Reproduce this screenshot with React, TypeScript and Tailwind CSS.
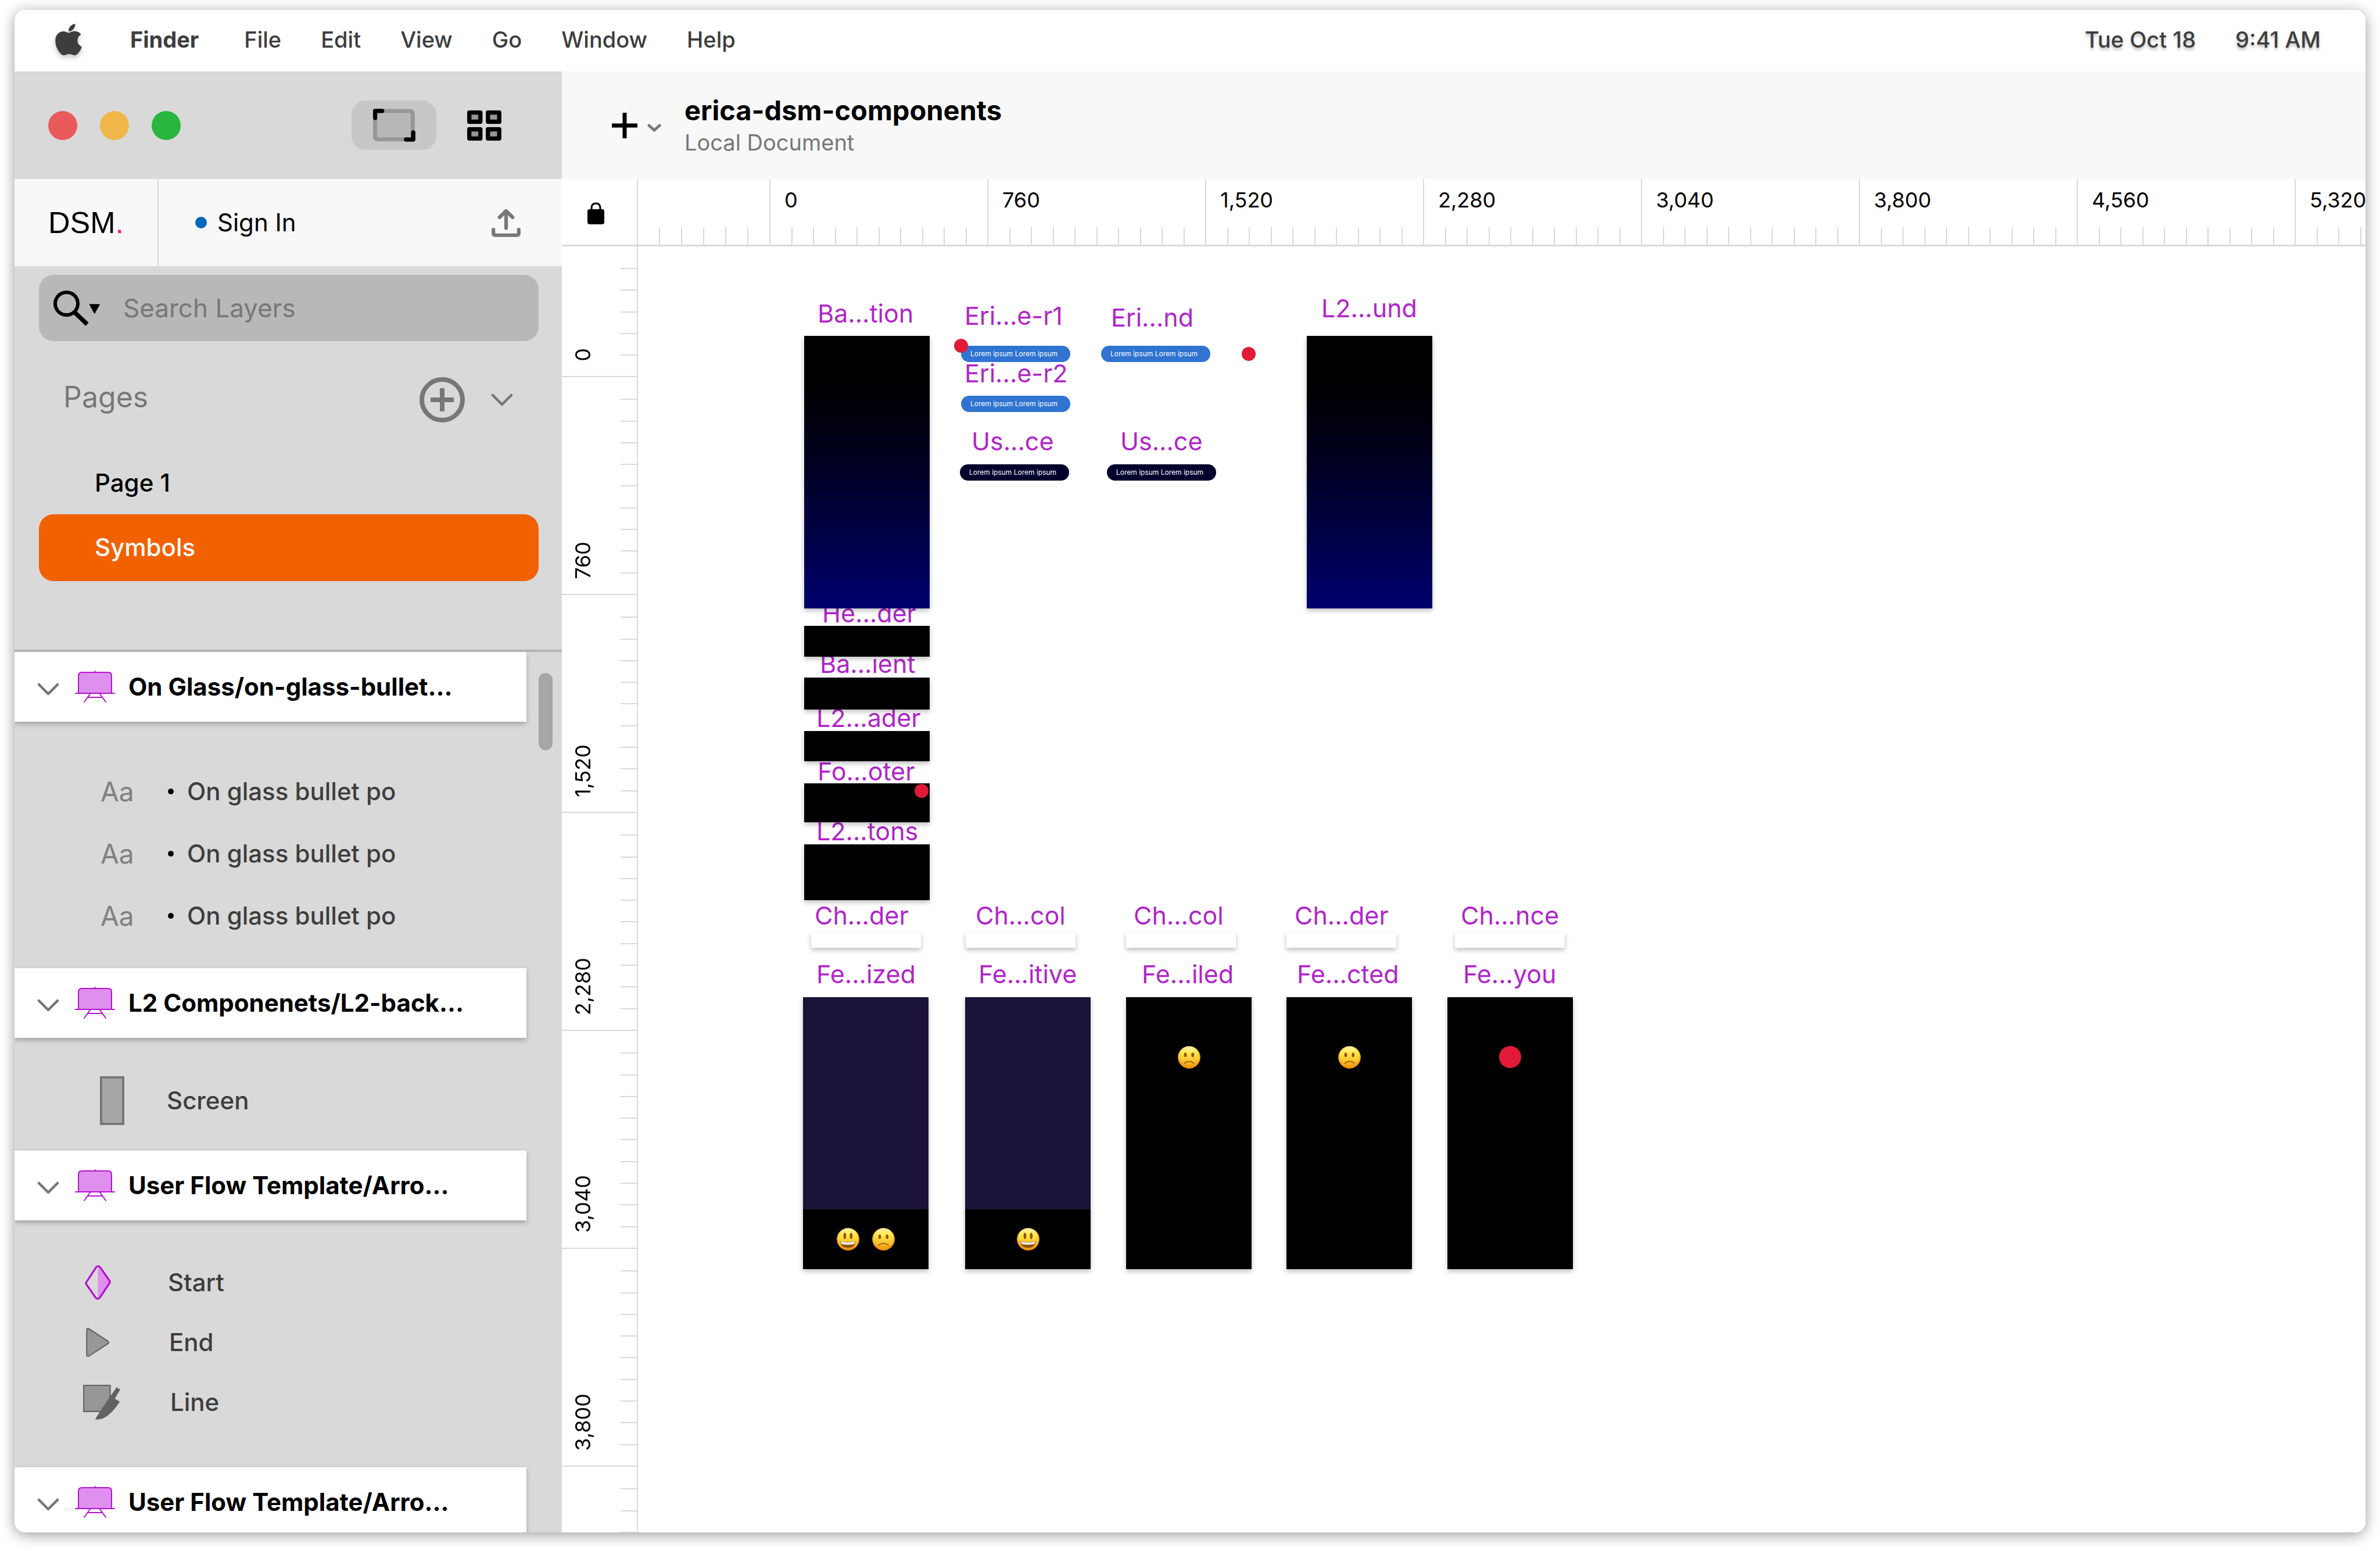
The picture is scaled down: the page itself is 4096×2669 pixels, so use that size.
import { useId, type ReactNode } from "react";
import { FaApple } from "react-icons/fa";

const MENUS = ["File", "Edit", "View", "Go", "Window", "Help"];
const RULER_X = ["0", "760", "1,520", "2,280", "3,040", "3,800", "4,560", "5,320"];
const RULER_Y = ["760", "1,520", "2,280", "3,040", "3,800"];

function Chevron({ className }: { className: string }) {
  return (
    <svg viewBox="0 0 38 22" className={className} fill="none" stroke="#777" strokeWidth="4.5" strokeLinecap="round" strokeLinejoin="round" aria-hidden="true">
      <path d="M3 3 L19 19 L35 3" />
    </svg>
  );
}

function ArtboardToggleIcon() {
  return (
    <svg viewBox="0 0 248 193" className="h-[57px] w-[73px]" fill="none" aria-hidden="true">
      <rect x="12" y="13" width="220" height="166" rx="14" fill="#b8b8b8" stroke="#979797" strokeWidth="24" />
      <path d="M12 54 V13 H53" stroke="#000" strokeWidth="25" strokeLinecap="round" strokeLinejoin="round" />
      <path d="M235 139 V180 H193" stroke="#000" strokeWidth="25" strokeLinecap="round" strokeLinejoin="round" />
    </svg>
  );
}

function GridIcon() {
  return (
    <svg viewBox="0 0 201 177" className="h-[52px] w-[59px]" fill="#979797" stroke="#000" strokeWidth="25" strokeLinejoin="round" aria-hidden="true">
      <rect x="12.5" y="12.5" width="65" height="54" />
      <rect x="122" y="12.5" width="66" height="54" />
      <rect x="12.5" y="110.5" width="65" height="54" />
      <rect x="122" y="110.5" width="66" height="54" />
    </svg>
  );
}

function UploadIcon() {
  return (
    <svg viewBox="0 0 171 167" className="h-[49px] w-[50px]" fill="none" stroke="#777" strokeWidth="21" strokeLinecap="round" strokeLinejoin="round" aria-hidden="true">
      <path d="M85.500 114 V14 M47 51 L85.500 13 L124 51" />
      <path d="M11 123 V146 Q11 156 21 156 H150 Q160 156 160 146 V123" />
    </svg>
  );
}

function SearchIcon() {
  return (
    <svg viewBox="0 0 80 61" className="h-[61px] w-[80px] shrink-0" aria-hidden="true">
      <circle cx="22.500" cy="22.500" r="19.500" fill="none" stroke="#000" strokeWidth="6" />
      <path d="M36 37 L58 58" stroke="#000" strokeWidth="7.500" />
      <path d="M62.500 24 H79 L70.700 39 Z" fill="#000" stroke="#000" strokeWidth="1.500" strokeLinejoin="round" />
    </svg>
  );
}

function AddCircleIcon() {
  return (
    <svg viewBox="0 0 78 78" className="size-[78px]" fill="none" stroke="#777" strokeWidth="8" aria-hidden="true">
      <circle cx="39" cy="39" r="35" />
      <path d="M39 19 V59 M19 39 H59" />
    </svg>
  );
}

function EaselIcon() {
  return (
    <svg viewBox="0 0 69 56" className="h-[56px] w-[69px] shrink-0" fill="none" stroke="#b512d0" strokeWidth="2" strokeLinecap="round" aria-hidden="true">
      <path d="M34.500 1 V3" />
      <path d="M6 39 V9 Q6 3 12 3 H57 Q63 3 63 9 V39 Z" fill="#df8fee" />
      <path d="M1 39 H68" />
      <path d="M26 40 L16 54 M43 40 L53 54 M22 46 H47" />
    </svg>
  );
}

function LockIcon() {
  return (
    <svg viewBox="0 0 29 38" className="h-[38px] w-[29px]" aria-hidden="true">
      <rect x="0" y="12" width="29" height="26" rx="4" fill="#000" />
      <path d="M7 13 V10 Q7 2 14.500 2 Q22 2 22 10 V13" fill="none" stroke="#000" strokeWidth="3" />
    </svg>
  );
}

function ScreenIcon() {
  return <span className="block h-[84px] w-[42px] border-4 border-[#777] bg-[#a6a6a6]" />;
}

function DiamondIcon() {
  return (
    <svg viewBox="0 0 150 202" className="h-[60px] w-[45px]" aria-hidden="true">
      <path d="M75 10 L139 92 Q145 98 140 104 L86 192 Q80 196 75 196 Z" fill="#df8fee" />
      <path d="M65 12 Q76 0 87 12 L142 90 Q147 97 142 105 L86 189 Q74 202 62 189 L8 111 Q4 105 8 99 Z" fill="none" stroke="#b512d0" strokeWidth="11" strokeLinejoin="round" />
    </svg>
  );
}

function TriangleIcon() {
  return (
    <svg viewBox="0 0 134 168" className="h-[50px] w-[40px]" aria-hidden="true">
      <path d="M4 14 Q4 -1 18 6 L125 76 Q136 84 125 93 L18 162 Q4 169 4 154 Z" fill="#979797" stroke="#626262" strokeWidth="7" />
    </svg>
  );
}

function KnifeIcon() {
  return (
    <svg viewBox="0 0 215 202" className="h-[60px] w-[64px]" aria-hidden="true">
      <rect x="3.500" y="3.500" width="153" height="151" fill="#979797" stroke="#626262" strokeWidth="7" />
      <path d="M194 14 L215 28 L184 80 L212 98 Q172 165 118 194 Q94 204 70 200 Q80 180 158 66 Z" fill="#626262" />
    </svg>
  );
}

function Face({ mood }: { mood: "happy" | "sad" }) {
  const id = useId();
  return (
    <svg viewBox="0 0 132 132" className="size-[39px]" role="img" aria-label={mood === "happy" ? "Smiling face" : "Frowning face"}>
      <defs>
        <linearGradient id={`${id}f`} x1="0" y1="0" x2="0" y2="1">
          <stop offset="0" stopColor="#fff3b0" />
          <stop offset="0.300" stopColor="#ffe94f" />
          <stop offset="0.600" stopColor="#fdca32" />
          <stop offset="1" stopColor="#f0930f" />
        </linearGradient>
        <radialGradient id={`${id}e`} cx="0.500" cy="0.450" r="0.550">
          <stop offset="0.700" stopColor="#f39a12" stopOpacity="0" />
          <stop offset="1" stopColor="#ee8a0c" stopOpacity="0.800" />
        </radialGradient>
      </defs>
      <circle cx="66" cy="66" r="65" fill={`url(#${id}f)`} />
      <circle cx="66" cy="66" r="65" fill={`url(#${id}e)`} />
      {mood === "happy" ? (
        <>
          <ellipse cx="47" cy="47" rx="8" ry="19" fill="#8f5205" />
          <ellipse cx="84" cy="47" rx="8" ry="19" fill="#8f5205" />
          <path d="M21 77 Q65 88 109 77 Q107 116 65 116 Q23 116 21 77 Z" fill="#8f5205" />
          <path d="M24 79 Q65 90 106 79 Q106 94 96 96 Q65 101 34 96 Q24 94 24 79 Z" fill="#ececf2" />
        </>
      ) : (
        <>
          <ellipse cx="44" cy="52" rx="8" ry="13" fill="#8f5205" />
          <ellipse cx="87" cy="52" rx="8" ry="13" fill="#8f5205" />
          <path d="M38 101 Q66 79 94 101" fill="none" stroke="#8f5205" strokeWidth="5" strokeLinecap="round" />
        </>
      )}
    </svg>
  );
}

function MenuBar() {
  return (
    <header className="flex h-[106px] shrink-0 items-center bg-white pb-[4px] pl-[69px] pr-[77px] text-[38px] leading-[44px] text-[#3d3d3d] [text-shadow:0_4px_4px_rgba(0,0,0,0.25)]">
      <button type="button" aria-label="Apple menu" className="mr-[82px] shrink-0 drop-shadow-[0_4px_4px_rgba(0,0,0,0.25)]">
        <FaApple className="h-[62px] w-[48px]" />
      </button>
      <button type="button" className="mr-[78px] font-bold">Finder</button>
      <nav className="flex gap-[68px]">
        {MENUS.map((m) => (
          <button key={m} type="button" className="font-medium">{m}</button>
        ))}
      </nav>
      <div className="ml-auto flex gap-[68px] font-medium">
        <span>Tue Oct 18</span>
        <time>9:41 AM</time>
      </div>
    </header>
  );
}

function LayerHeader({ title }: { title: string }) {
  return (
    <button type="button" className="flex h-[120px] w-full shrink-0 items-center bg-white pl-[39px] text-left shadow-[0_4px_8px_rgba(0,0,0,0.25)]">
      <Chevron className="mt-[8px] h-[22px] w-[38px] shrink-0" />
      <span className="ml-[27px]"><EaselIcon /></span>
      <span className="ml-[23px] text-[42px] font-bold leading-[48px] text-black">{title}</span>
    </button>
  );
}

function LayerRow({ icon, label, className }: { icon: ReactNode; label: string; className: string }) {
  return (
    <li className={`flex items-center ${className}`}>
      {icon}
      <span className="text-[42px] font-medium leading-[48px] text-[#3d3d3d]">{label}</span>
    </li>
  );
}

function Sidebar() {
  return (
    <aside className="flex w-[942px] shrink-0 flex-col overflow-hidden bg-[#d9d9d9]">
      <div className="flex h-[185px] shrink-0 items-center pl-[58px] pr-[104px]">
        <div className="flex gap-[39px]">
          <button type="button" aria-label="Close" className="size-[50px] rounded-full bg-[#e95a5a]" />
          <button type="button" aria-label="Minimize" className="size-[50px] rounded-full bg-[#f0b648]" />
          <button type="button" aria-label="Zoom" className="size-[50px] rounded-full bg-[#28b63f]" />
        </div>
        <div className="ml-auto flex items-center gap-[53px]">
          <button type="button" aria-label="Canvas view" className="flex h-[85px] w-[146px] items-center justify-center rounded-[24px] bg-[#c7c7c7]">
            <ArtboardToggleIcon />
          </button>
          <button type="button" aria-label="Components view"><GridIcon /></button>
        </div>
      </div>

      <div className="flex h-[150px] shrink-0 bg-[#f8f8f8]">
        <div className="flex w-[248px] items-center justify-center border-r-2 border-[#d9d9d9] font-['Liberation_Sans',sans-serif] text-[52px] leading-[60px]">
          DSM<span className="text-[#ff1075]">.</span>
        </div>
        <div className="flex flex-1 items-center pl-[63px] pr-[71px]">
          <span className="mr-[18px] size-[20px] rounded-full bg-[#0068b8]" />
          <button type="button" className="text-[42px] leading-[48px]">Sign In</button>
          <button type="button" aria-label="Upload" className="ml-auto"><UploadIcon /></button>
        </div>
      </div>

      <label className="ml-[42px] mr-[40px] mt-[15px] flex h-[114px] shrink-0 items-center gap-[40px] rounded-[25px] bg-[#b8b8b8] pl-[25px]">
        <SearchIcon />
        <input type="text" aria-label="Search Layers" placeholder="Search Layers" className="min-w-0 flex-1 bg-transparent text-[44px] leading-[52px] outline-none placeholder:text-[#777] placeholder:opacity-100" />
      </label>

      <section className="shrink-0 pb-[118px]">
        <div className="mt-[62px] flex h-[78px] items-center pl-[84px] pr-[84px] text-[#777]">
          <h2 className="pb-[10px] text-[50px] leading-[60px]">Pages</h2>
          <button type="button" aria-label="Add page" className="ml-auto mr-[45px]"><AddCircleIcon /></button>
          <button type="button" aria-label="Collapse pages"><Chevron className="h-[22px] w-[38px]" /></button>
        </div>
        <div className="ml-[42px] mr-[40px] mt-[50px] flex flex-col text-[42px] font-medium leading-[48px]">
          <button type="button" className="h-[108px] pl-[96px] text-left text-black">Page 1</button>
          <button type="button" className="h-[115px] rounded-[25px] bg-[#f26100] pb-[2px] pl-[96px] text-left text-white">Symbols</button>
        </div>
      </section>

      <section className="flex min-h-0 flex-1 overflow-hidden border-t-4 border-[#b3b3b3]">
        <div className="min-w-0 flex-1">
          <LayerHeader title="On Glass/on-glass-bullet..." />
          <ul className="pb-[37px] pt-[66px]">
            {[0, 1, 2].map((i) => (
              <LayerRow
                key={i}
                className="h-[107px] pl-[148px]"
                icon={
                  <>
                    <span className="w-[116px] text-[46px] leading-[48px] text-[#808080]">Aa</span>
                    <span className="mr-[23px] size-[10px] rounded-full bg-black" />
                  </>
                }
                label="On glass bullet po"
              />
            ))}
          </ul>
          <LayerHeader title="L2 Componenets/L2-back..." />
          <ul className="pb-[44px] pt-[66px]">
            <LayerRow className="h-[84px] pl-[147px]" icon={<span className="w-[115px]"><ScreenIcon /></span>} label="Screen" />
          </ul>
          <LayerHeader title="User Flow Template/Arro..." />
          <ul className="pb-[61px] pt-[55px]">
            <LayerRow className="h-[103px] pl-[118px]" icon={<span className="w-[146px] pl-[3px]"><DiamondIcon /></span>} label="Start" />
            <LayerRow className="h-[103px] pl-[118px]" icon={<span className="w-[148px] pl-[5px]"><TriangleIcon /></span>} label="End" />
            <LayerRow className="h-[103px] pl-[118px]" icon={<span className="w-[150px]"><KnifeIcon /></span>} label="Line" />
          </ul>
          <LayerHeader title="User Flow Template/Arro..." />
        </div>
        <div className="w-[61px] shrink-0 pl-[21px] pt-[36px]">
          <div className="h-[133px] w-[24px] rounded-full bg-[#a6a6a6]" />
        </div>
      </section>
    </aside>
  );
}

function DocumentBar() {
  return (
    <div className="flex h-[185px] shrink-0 items-center bg-[#f8f8f8] pl-[86px]">
      <button type="button" aria-label="Insert" className="flex items-center gap-[17px]">
        <svg viewBox="0 0 44 44" className="size-[44px]" stroke="#000" strokeWidth="7" aria-hidden="true">
          <path d="M22 0 V44 M0 22 H44" />
        </svg>
        <svg viewBox="0 0 24 14" className="mt-[8px] h-[14px] w-[24px]" fill="none" stroke="#777" strokeWidth="5" strokeLinecap="round" aria-hidden="true">
          <path d="M3 3 L12 11 L21 3" />
        </svg>
      </button>
      <div className="ml-[40px] pt-[2px]">
        <h1 className="text-[47px] font-bold leading-[56px]">erica-dsm-components</h1>
        <p className="text-[38px] leading-[54px] text-[#777]">Local Document</p>
      </div>
    </div>
  );
}

function Ticks({ count }: { count: number }) {
  return (
    <div className="mt-auto flex h-[30px]">
      {Array.from({ length: count }, (_, i) => (
        <span key={i} className={i === count - 1 ? "flex-1" : "flex-1 border-r-2 border-[#d9d9d9]"} />
      ))}
    </div>
  );
}

function TopRuler() {
  return (
    <div className="flex h-[116px] shrink-0 border-b-3 border-[#d9d9d9]">
      <div className="flex w-[131px] shrink-0 justify-center border-r-2 border-[#d9d9d9] pt-[40px]">
        <button type="button" aria-label="Lock rulers" className="mr-[13px] self-start"><LockIcon /></button>
      </div>
      <div className="flex min-w-0 flex-1 overflow-hidden">
        <div className="flex w-[226px] shrink-0 flex-col"><Ticks count={6} /></div>
        {RULER_X.map((n) => (
          <div key={n} className="flex w-[375px] shrink-0 flex-col border-l-2 border-[#d9d9d9] pt-[16px]">
            <span className="pl-[24px] text-[36px] leading-[40px]">{n}</span>
            <Ticks count={10} />
          </div>
        ))}
      </div>
    </div>
  );
}

function SideBlock({ label, count, className }: { label: string; count: number; className: string }) {
  return (
    <div className={`flex shrink-0 items-end justify-between border-b-2 border-[#d9d9d9] ${className}`}>
      <span className="mb-[25px] ml-[16px] rotate-180 text-[36px] leading-[40px] [writing-mode:vertical-rl]">{label}</span>
      <div className="flex w-[28px] flex-col self-stretch pt-[2px]">
        {Array.from({ length: count }, (_, i) => (
          <span key={i} className={i === count - 1 ? "flex-1" : "flex-1 border-b-2 border-[#d9d9d9]"} />
        ))}
      </div>
    </div>
  );
}

function SideRuler() {
  return (
    <div className="flex w-[131px] shrink-0 flex-col overflow-hidden border-r-2 border-[#d9d9d9]">
      <SideBlock label="0" count={6} className="h-[225px]" />
      {RULER_Y.map((n) => (
        <SideBlock key={n} label={n} count={10} className="h-[375px]" />
      ))}
      <SideBlock label="" count={10} className="h-[375px]" />
    </div>
  );
}

type Item = { x: number; y: number };

const LABELS: (Item & { text: string })[] = [
  { text: "Ba...tion", x: 309, y: 95 },
  { text: "Eri...e-r1", x: 562, y: 99 },
  { text: "Eri...nd", x: 814, y: 102 },
  { text: "L2...und", x: 1176, y: 86 },
  { text: "Eri...e-r2", x: 562, y: 198 },
  { text: "Us...ce", x: 574, y: 315 },
  { text: "Us...ce", x: 830, y: 315 },
  { text: "He...der", x: 317, y: 611 },
  { text: "Ba...ient", x: 313, y: 698 },
  { text: "L2...ader", x: 307, y: 791 },
  { text: "Fo...oter", x: 309, y: 883 },
  { text: "L2...tons", x: 307, y: 986 },
  { text: "Ch...der", x: 304, y: 1131 },
  { text: "Ch...col", x: 581, y: 1131 },
  { text: "Ch...col", x: 853, y: 1131 },
  { text: "Ch...der", x: 1130, y: 1131 },
  { text: "Ch...nce", x: 1416, y: 1131 },
  { text: "Fe...ized", x: 307, y: 1232 },
  { text: "Fe...itive", x: 586, y: 1232 },
  { text: "Fe...iled", x: 867, y: 1232 },
  { text: "Fe...cted", x: 1134, y: 1232 },
  { text: "Fe...you", x: 1420, y: 1232 },
];

const BARS: (Item & { h: number })[] = [
  { x: 286, y: 653, h: 53 },
  { x: 286, y: 742, h: 55 },
  { x: 286, y: 834, h: 52 },
  { x: 286, y: 924, h: 67 },
  { x: 286, y: 1029, h: 96 },
];

const PILLS: (Item & { dark?: boolean })[] = [
  { x: 556, y: 171 },
  { x: 556, y: 257 },
  { x: 797, y: 171 },
  { x: 554, y: 375, dark: true },
  { x: 807, y: 375, dark: true },
];

const DOTS: Item[] = [
  { x: 544, y: 159 },
  { x: 1039, y: 173 },
  { x: 476, y: 925 },
];

const STRIPS: Item[] = [298, 564, 840, 1116, 1406].map((x) => ({ x, y: 1180 }));

function Screen({ x, children }: { x: number; children: ReactNode }) {
  return (
    <div className="absolute flex h-[468px] w-[216px] flex-col bg-black shadow-[0_4px_8px_rgba(0,0,0,0.25)]" style={{ left: x, top: 1292 }}>
      {children}
    </div>
  );
}

function Canvas() {
  return (
    <main className="relative min-w-0 flex-1 overflow-hidden bg-white">
      {LABELS.map((l, i) => (
        <span key={i} className="absolute whitespace-nowrap text-[43px] leading-[40px] text-[#b025c9]" style={{ left: l.x, top: l.y }}>
          {l.text}
        </span>
      ))}
      {[286, 1151].map((x) => (
        <div key={x} className="absolute h-[469px] w-[216px] bg-linear-to-b from-black to-[#00006e] shadow-[0_4px_8px_rgba(0,0,0,0.25)]" style={{ left: x, top: 154 }} />
      ))}
      {BARS.map((b) => (
        <div key={b.y} className="absolute w-[216px] bg-black shadow-[0_4px_8px_rgba(0,0,0,0.25)]" style={{ left: b.x, top: b.y, height: b.h }} />
      ))}
      {PILLS.map((p, i) => (
        <div
          key={i}
          className={`absolute flex h-[28px] w-[188px] items-center rounded-[14px] pl-[16px] text-[12px] leading-[16px] text-white ${p.dark ? "bg-[#00002c]" : "bg-[#3073d1]"}`}
          style={{ left: p.x, top: p.y }}
        >
          Lorem ipsum Lorem ipsum
        </div>
      ))}
      {DOTS.map((d, i) => (
        <div key={i} className="absolute size-[24px] rounded-full bg-[#e21a37]" style={{ left: d.x, top: d.y }} />
      ))}
      {STRIPS.map((s) => (
        <div key={s.x} className="absolute h-[27px] w-[189px] bg-white shadow-[0_4px_8px_rgba(0,0,0,0.25)]" style={{ left: s.x, top: s.y }} />
      ))}
      <Screen x={284}>
        <div className="h-[365px] bg-[#1b1239]" />
        <div className="flex flex-1 items-center justify-center gap-[22px]">
          <Face mood="happy" />
          <Face mood="sad" />
        </div>
      </Screen>
      <Screen x={563}>
        <div className="h-[365px] bg-[#1b1239]" />
        <div className="flex flex-1 items-center justify-center"><Face mood="happy" /></div>
      </Screen>
      <Screen x={840}>
        <div className="flex justify-center pt-[84px]"><Face mood="sad" /></div>
      </Screen>
      <Screen x={1116}>
        <div className="flex justify-center pt-[84px]"><Face mood="sad" /></div>
      </Screen>
      <Screen x={1393}>
        <div className="flex justify-center pt-[84px]"><span className="size-[38px] rounded-full bg-[#e21a37]" /></div>
      </Screen>
    </main>
  );
}

export default function App() {
  return (
    <div className="h-screen w-full bg-white px-[25px] pb-[32px] pt-[17px] font-['Inter',sans-serif] text-black">
      <div className="flex h-full flex-col overflow-hidden rounded-[18px] shadow-[0_4px_24px_rgba(0,0,0,0.4)]">
        <MenuBar />
        <div className="flex min-h-0 flex-1">
          <Sidebar />
          <div className="flex min-w-0 flex-1 flex-col bg-white">
            <DocumentBar />
            <TopRuler />
            <div className="flex min-h-0 flex-1">
              <SideRuler />
              <Canvas />
            </div>
          </div>
        </div>
      </div>
    </div>
  );
}
